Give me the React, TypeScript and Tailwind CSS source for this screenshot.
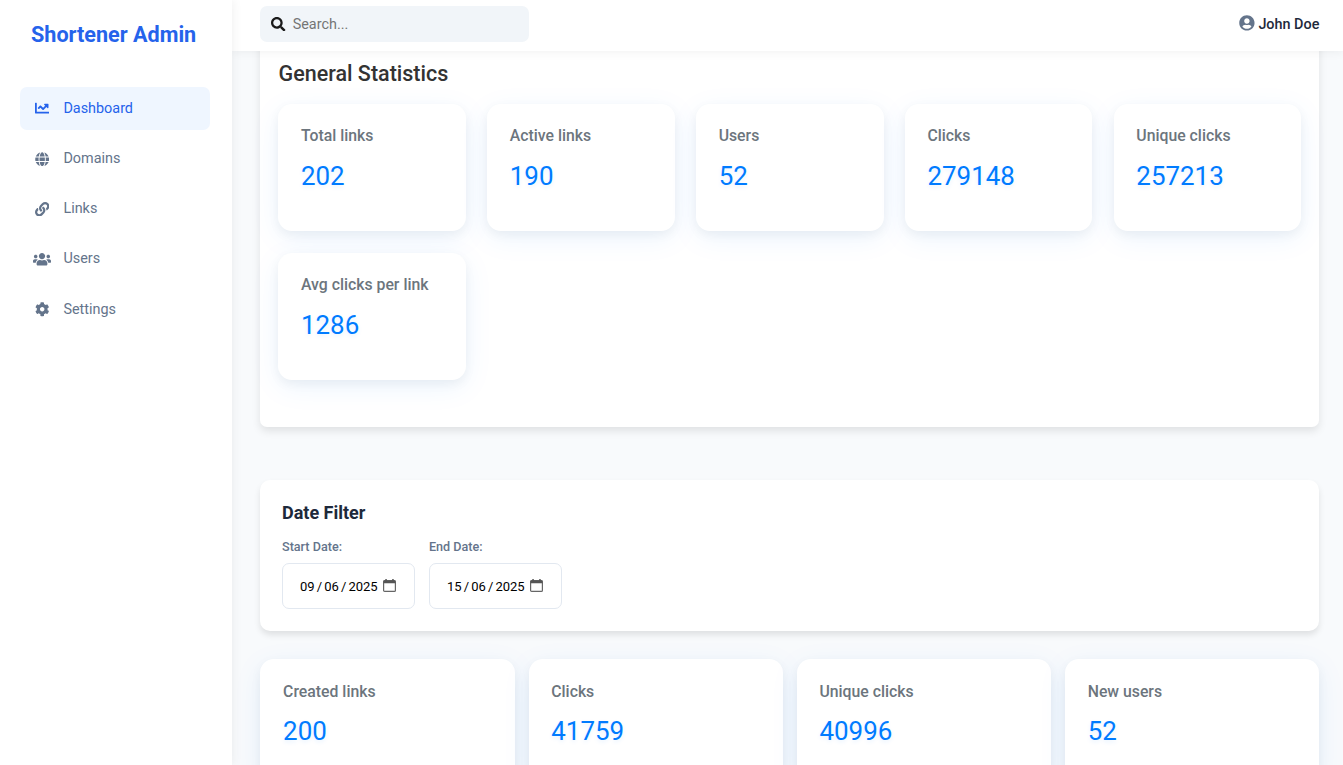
import type { ReactNode } from "react";
import type { IconType } from "react-icons";
import {
  FaChartLine,
  FaCog,
  FaGlobe,
  FaLink,
  FaSearch,
  FaUserCircle,
  FaUsers,
} from "react-icons/fa";

type NavEntry = { label: string; icon: IconType; iconClass: string; active?: boolean };
type Stat = { label: string; value: string };

const navEntries: NavEntry[] = [
  { label: "Dashboard", icon: FaChartLine, iconClass: "size-[14.4px]", active: true },
  { label: "Domains", icon: FaGlobe, iconClass: "size-[14.4px]" },
  { label: "Links", icon: FaLink, iconClass: "size-[14.4px]" },
  { label: "Users", icon: FaUsers, iconClass: "h-[14.4px] w-[18px]" },
  { label: "Settings", icon: FaCog, iconClass: "size-[14.4px]" },
];

const generalStats: Stat[] = [
  { label: "Total links", value: "202" },
  { label: "Active links", value: "190" },
  { label: "Users", value: "52" },
  { label: "Clicks", value: "279148" },
  { label: "Unique clicks", value: "257213" },
  { label: "Avg clicks per link", value: "1286" },
];

const periodStats: Stat[] = [
  { label: "Created links", value: "200" },
  { label: "Clicks", value: "41759" },
  { label: "Unique clicks", value: "40996" },
  { label: "New users", value: "52" },
];

function Sidebar() {
  return (
    <aside className="relative z-10 flex w-[232px] shrink-0 flex-col bg-white shadow-[2px_0_9px_rgba(0,0,0,0.05)]">
      <h1 className="pt-[19px] pl-[31px] text-[21.6px] leading-[31px] font-bold whitespace-nowrap text-[#2563eb]">
        Shortener Admin
      </h1>
      <nav className="mt-[37px] flex flex-col gap-[7.26px] px-5">
        {navEntries.map(({ label, icon: Icon, iconClass, active }) => (
          <a
            key={label}
            href="#"
            className={
              active
                ? "flex h-[43px] w-[190px] items-center rounded-[7px] bg-[#eff6ff] pl-[13px] text-[14.4px] text-[#2563eb]"
                : "flex h-[43px] w-[190px] items-center rounded-[7px] pl-[13px] text-[14.4px] text-[#64748b]"
            }
          >
            <span className="mr-[12.4px] flex w-[18px] shrink-0 justify-center">
              <Icon className={iconClass} />
            </span>
            {label}
          </a>
        ))}
      </nav>
    </aside>
  );
}

function Header() {
  return (
    <header className="relative z-[5] flex h-[51px] shrink-0 items-start justify-between bg-white pr-6 pl-7 shadow-[0_2px_9px_rgba(0,0,0,0.05)]">
      <div className="mt-1.5 flex h-9 w-[269px] items-center rounded-[7px] bg-[#f1f5f9] pl-[11.3px]">
        <FaSearch className="size-[14.4px] text-[#1a1a1a]" />
        <span className="mt-px ml-[7px] text-[14.4px] text-[#757575]">Search...</span>
      </div>
      <div className="mt-[13px] -mr-[0.4px] flex items-center gap-[3.6px]">
        <FaUserCircle className="-mt-[3px] size-[15.8px] text-[#64748b]" />
        <span className="text-[14.4px] leading-[23px] font-medium text-[#1e293b]">John Doe</span>
      </div>
    </header>
  );
}

function StatCard({ label, value }: Stat) {
  return (
    <article className="h-[127px] rounded-[14px] bg-white px-[22.7px] pt-[22.3px] shadow-[0_7px_29px_rgba(0,123,255,0.08),0_4px_11px_rgba(0,0,0,0.05)]">
      <h3 className="text-[15.8px] leading-[19px] font-medium whitespace-nowrap text-[#6c757d]">{label}</h3>
      <p className="mt-[11.7px] text-[25.92px] leading-[39px] text-[#007bff] [text-shadow:0_2px_4px_rgba(0,123,255,0.1)]">
        {value}
      </p>
    </article>
  );
}

function CalendarIcon() {
  return (
    <svg viewBox="0 0 13 13" className="-mt-px -ml-[0.5px] size-[13px]" fill="none">
      <rect x="0.6" y="1.7" width="11.8" height="10.7" rx="1" stroke="#666" strokeWidth="1.2" />
      <path d="M0.6 1.5h11.800v2.700H0.600zM2.300 0h1.500v2H2.300zM9.200 0h1.500v2H9.200z" fill="#555" />
    </svg>
  );
}

function DateField({ label, children }: { label: string; children: ReactNode }) {
  return (
    <div className="flex w-[133px] flex-col">
      <span className="text-[12.6px] leading-[19px] font-medium text-[#64748b]">{label}</span>
      <div className="mt-[7px] flex h-[46px] items-center rounded-[7px] border border-[#e2e8f0] pl-[17px] text-[13px] text-black">
        <span className="mt-px w-[83px] [word-spacing:-1.1px] whitespace-nowrap">{children}</span>
        <CalendarIcon />
      </div>
    </div>
  );
}

export default function App() {
  return (
    <div className="flex h-[765px] w-full overflow-hidden bg-[#f8fafc] font-[Roboto,sans-serif]">
      <Sidebar />
      <div className="flex min-w-0 flex-1 flex-col">
        <Header />
        <main className="min-h-0 flex-1 overflow-hidden pr-6 pl-7">
          <section className="-mt-5 h-[396px] rounded-[7px] bg-white pt-[27px] pr-[17.7px] pl-[18.3px] shadow-[0_4px_9px_rgba(0,0,0,0.1)]">
            <h2 className="pl-[0.3px] text-[21.5px] leading-[32px] font-medium text-[#333]">General Statistics</h2>
            <div className="mt-[14px] grid grid-cols-5 gap-x-[21.2px] gap-y-[22px]">
              {generalStats.map((stat) => (
                <StatCard key={stat.label} {...stat} />
              ))}
            </div>
          </section>
          <section className="mt-[53px] h-[151px] rounded-[10px] bg-white px-[22px] pt-5 shadow-[0_4px_6px_rgba(0,0,0,0.1)]">
            <h2 className="text-[18px] leading-[26px] font-bold text-[#1e293b]">Date Filter</h2>
            <div className="mt-[11px] flex gap-[14px]">
              <DateField label="Start Date:">09 / 06 / 2025</DateField>
              <DateField label="End Date:">15 / 06 / 2025</DateField>
            </div>
          </section>
          <section className="mt-[28.4px] -mr-[0.2px] grid grid-cols-4 gap-[14px] pl-[0.4px]">
            {periodStats.map((stat) => (
              <StatCard key={stat.label} {...stat} />
            ))}
          </section>
        </main>
      </div>
    </div>
  );
}
